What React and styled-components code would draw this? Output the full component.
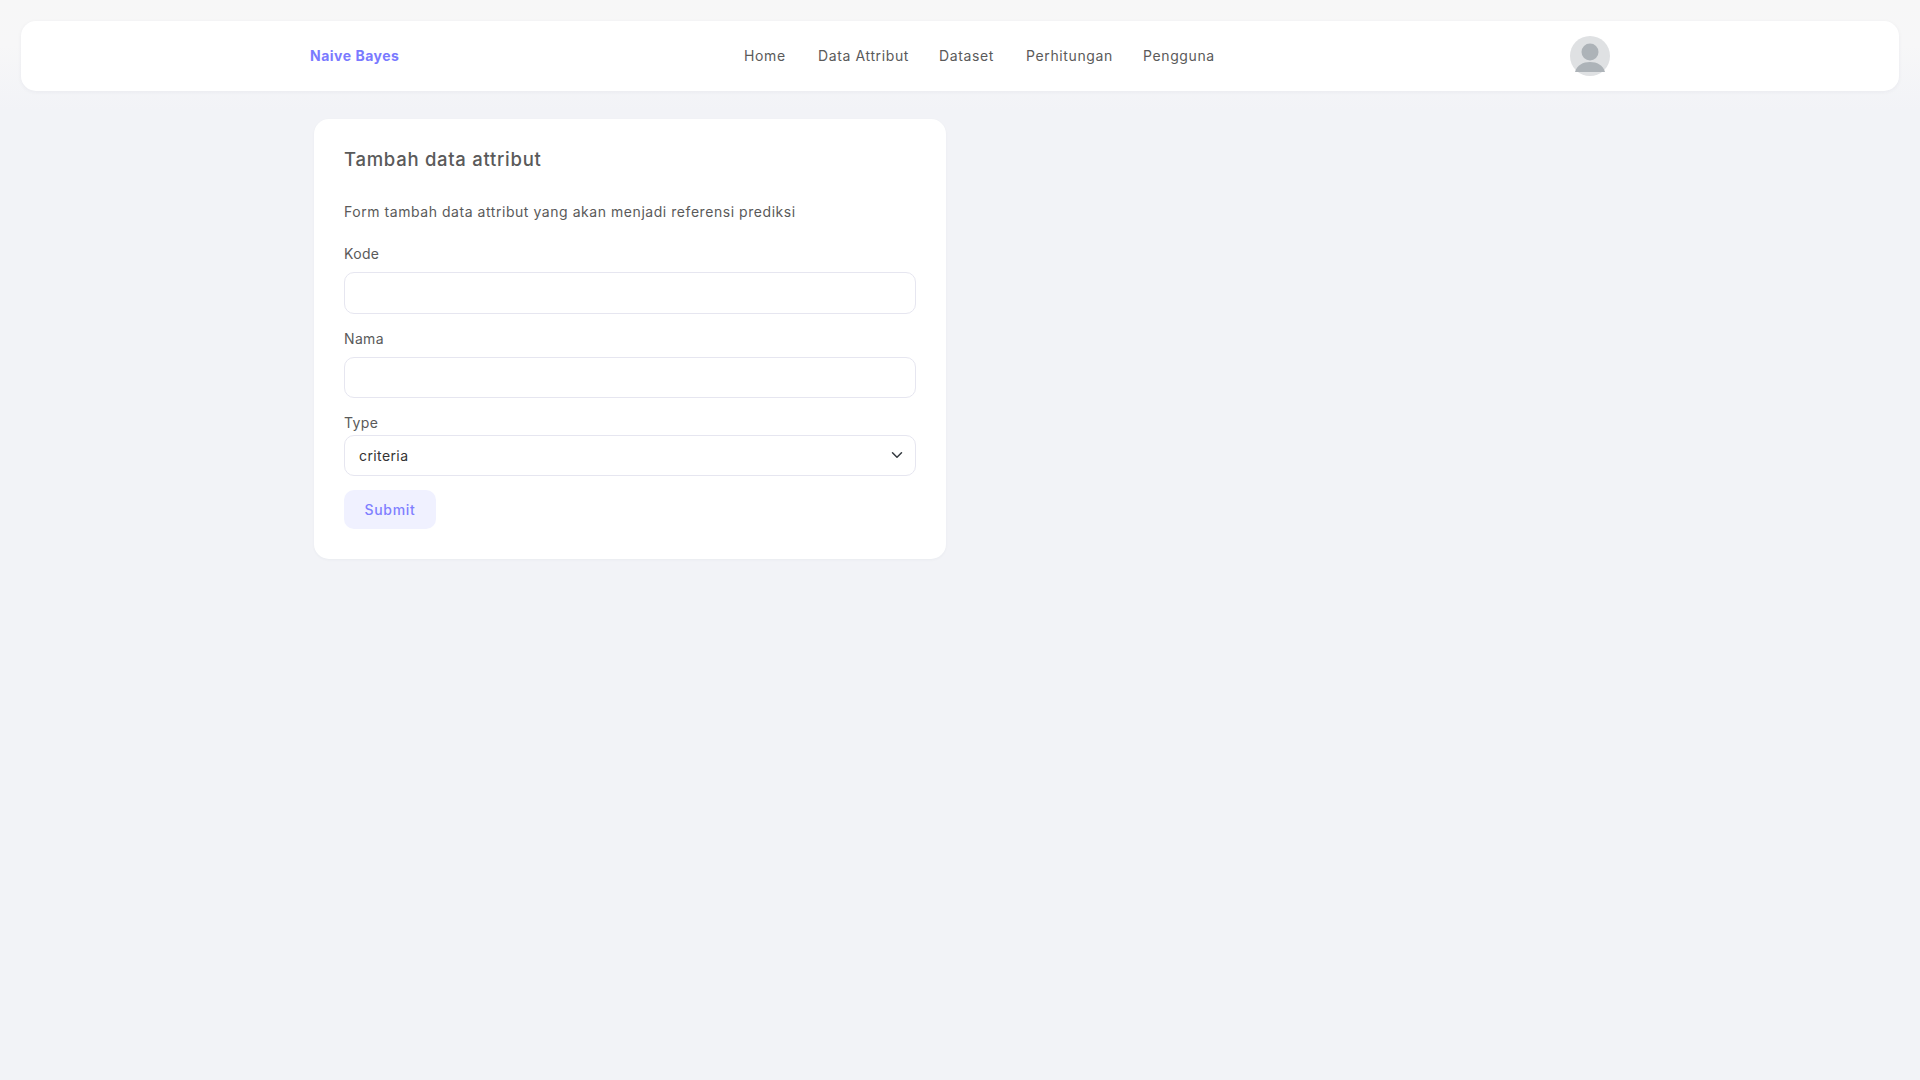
import React from "react";
import styled, { createGlobalStyle } from "styled-components";

const Global = createGlobalStyle`
  * { box-sizing: border-box; }
  html, body { margin: 0; padding: 0; }
  body {
    min-height: 1080px;
    background: linear-gradient(#f7f7f7 0, #f7f7f8 45px, #f2f3f7 110px) no-repeat #f2f3f7;
    font-family: Inter, "Liberation Sans", sans-serif;
    color: #555;
  }
`;

const Page = styled.div`
  padding-top: 21px;
`;

const Navbar = styled.header`
  height: 70px;
  margin: 0 21px;
  padding: 0 289px;
  display: flex;
  align-items: center;
  background: #fff;
  border-radius: 15px;
  box-shadow: 0 1px 4px rgba(30, 40, 80, 0.05);
`;

const Brand = styled.a`
  width: 434px;
  font-size: 14px;
  line-height: 18px;
  font-weight: 700;
  letter-spacing: 0.5px;
  color: #7a7aff;
`;

const NavLinks = styled.nav`
  display: flex;
  gap: 32px;
`;

const NavLink = styled.a`
  width: ${(p) => p.$w}px;
  font-size: 14px;
  line-height: 20px;
  white-space: nowrap;
  color: #5a5a5a;
  letter-spacing: 0.62px;
`;

const Avatar = styled.svg`
  display: block;
  width: 40px;
  height: 40px;
  margin-left: auto;
`;

const Card = styled.main`
  width: 632px;
  margin: 28px 0 0 314px;
  padding: 30px;
  background: #fff;
  border-radius: 15px;
  box-shadow: 0 1px 3px rgba(30, 40, 80, 0.04);
`;

const Title = styled.h1`
  margin: 0 0 32px;
  font-size: 18.5px;
  line-height: 21px;
  font-weight: 500;
  letter-spacing: 0.72px;
  color: #5a5a5a;
`;

const Description = styled.p`
  margin: 0 0 22px;
  font-size: 14px;
  line-height: 20px;
  letter-spacing: 0.55px;
  color: #5a5a5a;
`;

const Field = styled.div`
  margin-bottom: 15px;
`;

const Label = styled.label`
  display: block;
  margin-bottom: ${(p) => p.$gap}px;
  font-size: 14px;
  line-height: 20px;
  letter-spacing: 0.35px;
  color: #5a5a5a;
`;

const TextInput = styled.input`
  display: block;
  width: 100%;
  height: ${(p) => p.$h}px;
  padding: 0 15px;
  border: 1px solid #e6e6f0;
  border-radius: 10px;
  background: #fff;
  outline: none;
  font: inherit;
`;

const SelectWrap = styled.div`
  position: relative;
`;

const Select = styled.select`
  display: block;
  width: 100%;
  height: 41px;
  padding: 0 14px 1px;
  appearance: none;
  border: 1px solid #e6e6f0;
  border-radius: 10px;
  background: #fff;
  outline: none;
  font-family: inherit;
  font-size: 14px;
  letter-spacing: 0.4px;
  color: #333;
`;

const Chevron = styled.svg`
  position: absolute;
  top: 14px;
  right: 13px;
  width: 12px;
  height: 12px;
  pointer-events: none;
`;

const Submit = styled.button`
  display: block;
  width: 92px;
  height: 39px;
  margin-top: -1px;
  padding: 0 0 1px;
  border: 0;
  border-radius: 10px;
  background: #f0f1ff;
  font-family: inherit;
  font-size: 14px;
  font-weight: 500;
  letter-spacing: 0.7px;
  color: #7f7fff;
`;

const links = [
  ["Home", 42],
  ["Data Attribut", 89],
  ["Dataset", 55],
  ["Perhitungan", 85],
  ["Pengguna", 72],
];

export default function App() {
  return (
    <Page>
      <Global />
      <Navbar>
        <Brand>Naive Bayes</Brand>
        <NavLinks>
          {links.map(([t, w]) => (
            <NavLink key={t} $w={w}>{t}</NavLink>
          ))}
        </NavLinks>
        <Avatar viewBox="0 0 40 40" aria-hidden="true">
          <circle cx="20" cy="20" r="20" fill="#dfe1e3" />
          <circle cx="20" cy="16" r="8.5" fill="#adb3b8" />
          <path d="M5 36C7 29 13 26 20 26S33 29 35 36Z" fill="#adb3b8" />
        </Avatar>
      </Navbar>
      <Card>
        <Title>Tambah data attribut</Title>
        <Description>Form tambah data attribut yang akan menjadi referensi prediksi</Description>
        <Field>
          <Label $gap={8}>Kode</Label>
          <TextInput $h={42} />
        </Field>
        <Field>
          <Label $gap={8}>Nama</Label>
          <TextInput $h={41} />
        </Field>
        <Field>
          <Label $gap={2}>Type</Label>
          <SelectWrap>
            <Select defaultValue="criteria">
              <option value="criteria">criteria</option>
            </Select>
            <Chevron viewBox="0 0 16 16" aria-hidden="true">
              <path d="M2 5l6 6 6-6" fill="none" stroke="#343a40" strokeWidth="2" strokeLinecap="round" strokeLinejoin="round" />
            </Chevron>
          </SelectWrap>
        </Field>
        <Submit type="button">Submit</Submit>
      </Card>
    </Page>
  );
}
